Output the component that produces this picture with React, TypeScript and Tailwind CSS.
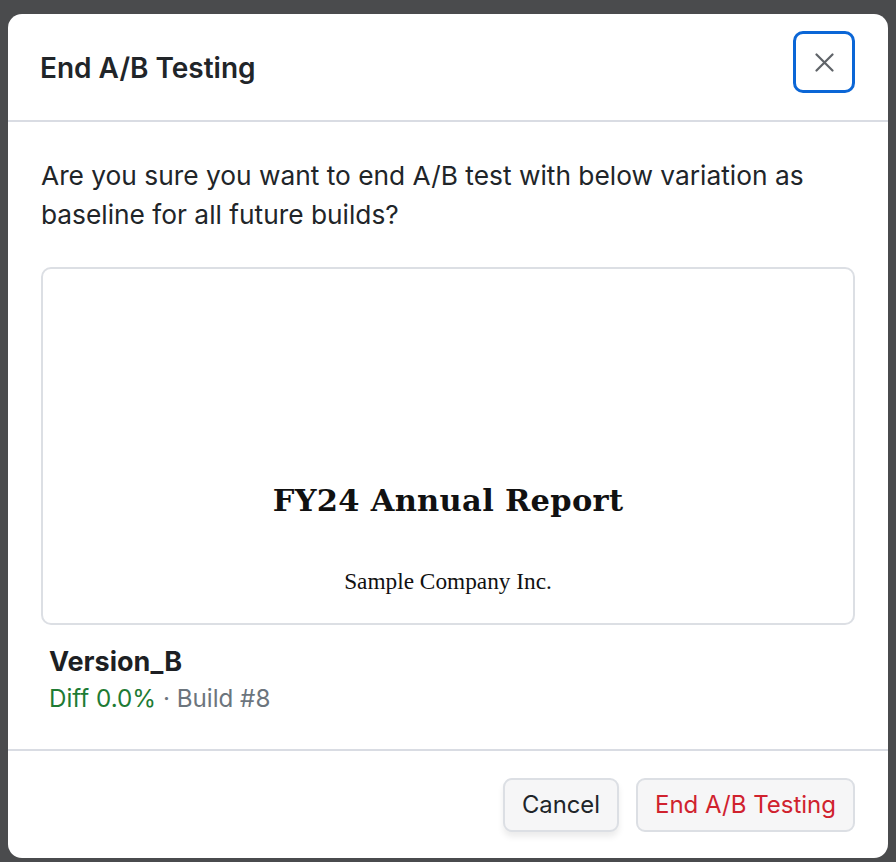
export default function App() {
  return (
    <div className="min-h-[862px] w-full bg-[#4a4b4d] px-[8px] pt-[14px] pb-[4px] font-['Inter',sans-serif]">
      <div className="flex w-[880px] flex-col rounded-[14px] bg-white">
        {/* header */}
        <div className="flex h-[108px] items-start justify-between border-b-[2px] border-[#d9dce3] pl-[32px] pr-[33px]">
          <h2 className="mt-[36px] text-[28px] font-semibold leading-[36px] text-[#212529]">End A/B Testing</h2>
          <button className="mt-[17px] flex h-[62px] w-[62px] items-center justify-center rounded-[10px] border-[3px] border-[#0b66d6]">
            <svg width="19" height="19" viewBox="0 0 19 19" fill="none" stroke="#5f6368" strokeWidth="2.2" strokeLinecap="round">
              <path d="M1.5 1.5 17.5 17.5M17.5 1.5 1.5 17.5" />
            </svg>
          </button>
        </div>

        {/* body */}
        <div className="px-[33px] pt-[34px] pb-[34px]">
          <p className="text-[26.3px] leading-[39px] text-[#212529]">
            Are you sure you want to end A/B test with below variation as baseline for all future builds?
          </p>
          <div className="mt-[33px] flex h-[358px] flex-col items-center rounded-[10px] border-[2px] border-[#dcdfe4] pt-[211px] text-[#111]">
            <div className="font-['DejaVu_Serif',serif] text-[30.5px] font-bold leading-[40px] tracking-[0.3px]">FY24 Annual Report</div>
            <div className="mt-[47px] font-['Liberation_Serif',serif] text-[23.3px] leading-[28px]">Sample Company Inc.</div>
          </div>
          <div className="px-[8px] pt-[20px]">
            <div className="text-[27px] font-bold leading-[34px] text-[#1d1f23]">Version_B</div>
            <div className="mt-[4px] text-[24.2px] leading-[32px]">
              <span className="text-[#1e7b34]">Diff 0.0%</span>
              <span className="text-[#6c757d]"> · Build #8</span>
            </div>
          </div>
        </div>

        {/* footer */}
        <div className="flex h-[109px] items-center justify-end gap-[17px] border-t-[2px] border-[#d9dce3] pr-[33px]">
          <button className="h-[54px] rounded-[9px] border-[2px] border-[#dcdfe4] bg-[#f6f6f7] px-[17px] text-[23.8px] text-[#212529] shadow-[0_5px_6px_rgba(0,0,0,0.08)]">
            Cancel
          </button>
          <button className="h-[54px] rounded-[9px] border-[2px] border-[#dcdfe4] bg-[#f6f6f7] px-[17px] text-[24px] text-[#d0222e]">
            End A/B Testing
          </button>
        </div>
      </div>
    </div>
  );
}
